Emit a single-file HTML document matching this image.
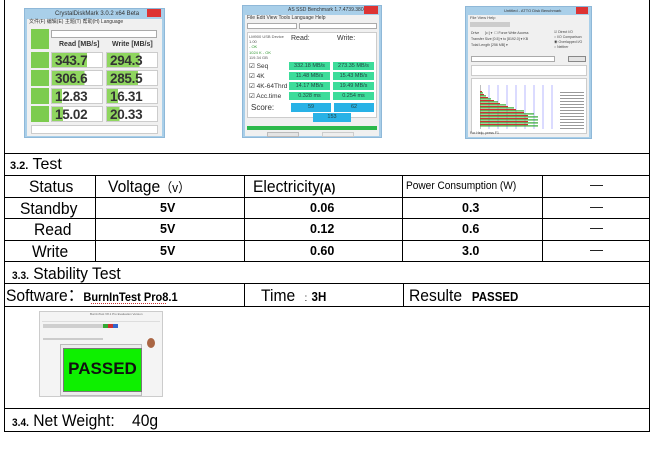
<!DOCTYPE html>
<html><head><meta charset="utf-8"><style>
*{margin:0;padding:0;box-sizing:border-box}
body{width:654px;height:456px;background:#fff;position:relative;overflow:hidden;font-family:"Liberation Sans","Noto Sans CJK SC",sans-serif;color:#000}
.a{position:absolute}
.hl{position:absolute;height:1px;background:#000}
.vl{position:absolute;width:1px;background:#000}
.t{position:absolute;white-space:nowrap;line-height:1}
.n{font-size:17px;transform:scaleX(.92);transform-origin:left}
.b{font-weight:bold;font-size:12.5px}
.cv{position:absolute;font-size:13.5px;font-weight:bold;color:#333;white-space:nowrap;line-height:1;letter-spacing:-.3px}
.sv{position:absolute;font-size:5.5px;color:#244;text-align:center;line-height:8px}
</style></head><body>

<div class="vl" style="left:4px;top:0;height:432px"></div>
<div class="vl" style="left:649px;top:0;height:432px"></div>
<div class="hl" style="left:4px;width:646px;top:153px"></div>
<div class="hl" style="left:4px;width:646px;top:175px"></div>
<div class="hl" style="left:4px;width:646px;top:197px"></div>
<div class="hl" style="left:4px;width:646px;top:218px"></div>
<div class="hl" style="left:4px;width:646px;top:240px"></div>
<div class="hl" style="left:4px;width:646px;top:261px"></div>
<div class="hl" style="left:4px;width:646px;top:283px"></div>
<div class="hl" style="left:4px;width:646px;top:306px"></div>
<div class="hl" style="left:4px;width:646px;top:408px"></div>
<div class="hl" style="left:4px;width:646px;top:431px"></div>
<div class="vl" style="left:95px;top:175px;height:87px"></div>
<div class="vl" style="left:244px;top:175px;height:87px"></div>
<div class="vl" style="left:402px;top:175px;height:87px"></div>
<div class="vl" style="left:542px;top:175px;height:87px"></div>
<div class="vl" style="left:244px;top:283px;height:23px"></div>
<div class="vl" style="left:403px;top:283px;height:23px"></div>

<!-- CrystalDiskMark -->
<div class="a" style="left:24px;top:8px;width:141px;height:130px;background:#a9cfe9;border:1px solid #8fb8d8">
 <div class="t" style="left:30px;top:2px;font-size:6px;color:#333">CrystalDiskMark 3.0.2 x64 Beta</div>
 <div class="a" style="right:3px;top:0;width:14px;height:8px;background:#d33"></div>
 <div class="a" style="left:2px;top:10px;width:135px;height:117px;background:#f0f0f0">
  <div class="t" style="left:2px;top:1px;font-size:5px;color:#333">文件(F) 编辑(E) 主题(T) 帮助(H) Language</div>
  <div class="a" style="left:4px;top:10px;width:18px;height:20px;background:#7ccc4e"></div>
  <div class="a" style="left:24px;top:11px;width:106px;height:8px;background:#fff;border:1px solid #aaa"></div>
  <div class="t" style="left:32px;top:22px;font-size:7px;font-weight:bold;color:#333">Read [MB/s]</div>
  <div class="t" style="left:85px;top:22px;font-size:7px;font-weight:bold;color:#333">Write [MB/s]</div>
  <div class="a" style="left:4px;top:33px;width:18px;height:16px;background:#7ccc4e"></div>
  <div class="a" style="left:4px;top:51px;width:18px;height:16px;background:#7ccc4e"></div>
  <div class="a" style="left:4px;top:69px;width:18px;height:16px;background:#7ccc4e"></div>
  <div class="a" style="left:4px;top:87px;width:18px;height:16px;background:#7ccc4e"></div>
  <div class="a" style="left:24px;top:33px;width:52px;height:16px;background:linear-gradient(90deg,#8fd65f 70%,#fff 70%);border:1px solid #ccc"></div>
  <div class="a" style="left:79px;top:33px;width:52px;height:16px;background:linear-gradient(90deg,#8fd65f 65%,#fff 65%);border:1px solid #ccc"></div>
  <div class="a" style="left:24px;top:51px;width:52px;height:16px;background:linear-gradient(90deg,#8fd65f 65%,#fff 65%);border:1px solid #ccc"></div>
  <div class="a" style="left:79px;top:51px;width:52px;height:16px;background:linear-gradient(90deg,#8fd65f 62%,#fff 62%);border:1px solid #ccc"></div>
  <div class="a" style="left:24px;top:69px;width:52px;height:16px;background:linear-gradient(90deg,#8fd65f 20%,#fff 20%);border:1px solid #ccc"></div>
  <div class="a" style="left:79px;top:69px;width:52px;height:16px;background:linear-gradient(90deg,#8fd65f 22%,#fff 22%);border:1px solid #ccc"></div>
  <div class="a" style="left:24px;top:87px;width:52px;height:16px;background:linear-gradient(90deg,#8fd65f 22%,#fff 22%);border:1px solid #ccc"></div>
  <div class="a" style="left:79px;top:87px;width:52px;height:16px;background:linear-gradient(90deg,#8fd65f 25%,#fff 25%);border:1px solid #ccc"></div>
  <div class="cv" style="left:28px;top:35px">343.7</div>
  <div class="cv" style="left:83px;top:35px">294.3</div>
  <div class="cv" style="left:28px;top:53px">306.6</div>
  <div class="cv" style="left:83px;top:53px">285.5</div>
  <div class="cv" style="left:28px;top:71px">12.83</div>
  <div class="cv" style="left:83px;top:71px">16.31</div>
  <div class="cv" style="left:28px;top:89px">15.02</div>
  <div class="cv" style="left:83px;top:89px">20.33</div>
  <div class="a" style="left:4px;top:106px;width:127px;height:9px;background:#fff;border:1px solid #ccc"></div>
 </div>
</div>

<!-- AS SSD -->
<div class="a" style="left:242px;top:5px;width:140px;height:133px;background:#a9cfe9;border:1px solid #8fb8d8">
 <div class="t" style="left:45px;top:2px;font-size:5px;color:#333">AS SSD Benchmark 1.7.4739.38088</div>
 <div class="a" style="right:3px;top:0;width:14px;height:8px;background:#d33"></div>
 <div class="a" style="left:2px;top:9px;width:134px;height:121px;background:#f0f0f0">
  <div class="t" style="left:2px;top:1px;font-size:5px;color:#333">File Edit View Tools Language Help</div>
  <div class="a" style="left:2px;top:8px;width:50px;height:6px;background:#fff;border:1px solid #aaa"></div>
  <div class="a" style="left:54px;top:8px;width:78px;height:6px;background:#fff;border:1px solid #aaa"></div>
  <div class="a" style="left:2px;top:17px;width:130px;height:86px;background:#fff;border:1px solid #ccc"></div>
  <div class="t" style="left:4px;top:19px;font-size:4px;color:#555;line-height:1.3">LM900 USB Device<br>1.00<br><span style="color:#393">- OK<br>1024 K - OK</span><br>119.34 GB</div>
  <div class="t" style="left:46px;top:20px;font-size:7px;color:#333">Read:</div>
  <div class="t" style="left:92px;top:20px;font-size:7px;color:#333">Write:</div>
  <div class="t" style="left:4px;top:47px;font-size:6.5px;color:#333;line-height:10px">☑ Seq<br>☑ 4K<br>☑ 4K-64Thrd<br>☑ Acc.time</div>
  <div class="a sv" style="left:44px;top:47px;width:41px;height:8px;background:#3ddc9a">332.18 MB/s</div>
  <div class="a sv" style="left:88px;top:47px;width:41px;height:8px;background:#3ddc9a">273.35 MB/s</div>
  <div class="a sv" style="left:44px;top:57px;width:41px;height:8px;background:#3ddc9a">11.48 MB/s</div>
  <div class="a sv" style="left:88px;top:57px;width:41px;height:8px;background:#3ddc9a">15.43 MB/s</div>
  <div class="a sv" style="left:44px;top:67px;width:41px;height:8px;background:#3ddc9a">14.17 MB/s</div>
  <div class="a sv" style="left:88px;top:67px;width:41px;height:8px;background:#3ddc9a">19.49 MB/s</div>
  <div class="a sv" style="left:44px;top:77px;width:41px;height:8px;background:#3ddc9a">0.328 ms</div>
  <div class="a sv" style="left:88px;top:77px;width:41px;height:8px;background:#3ddc9a">0.254 ms</div>
  <div class="t" style="left:6px;top:89px;font-size:8px;color:#333">Score:</div>
  <div class="a sv" style="left:46px;top:88px;width:40px;height:9px;background:#28b2e6">59</div>
  <div class="a sv" style="left:89px;top:88px;width:40px;height:9px;background:#28b2e6">62</div>
  <div class="a sv" style="left:68px;top:98px;width:38px;height:9px;background:#28b2e6">153</div>
  <div class="a" style="left:2px;top:111px;width:130px;height:4px;background:#2bb84a"></div>
  <div class="a" style="left:22px;top:117px;width:32px;height:5px;background:#e4e4e4;border:1px solid #bbb"></div>
  <div class="a" style="left:77px;top:117px;width:32px;height:5px;background:#eee;border:1px solid #ccc"></div>
 </div>
</div>

<!-- ATTO -->
<div class="a" style="left:465px;top:6px;width:127px;height:133px;background:#a9cfe9;border:1px solid #8fb8d8">
 <div class="t" style="left:38px;top:2px;font-size:4px;color:#333">Untitled - ATTO Disk Benchmark</div>
 <div class="a" style="right:3px;top:0;width:12px;height:7px;background:#d33"></div>
 <div class="a" style="left:2px;top:8px;width:121px;height:122px;background:#f0f0f0">
  <div class="t" style="left:2px;top:1px;font-size:4px;color:#444">File View Help</div>
  <div class="a" style="left:2px;top:7px;width:40px;height:5px;background:#ccc"></div>
  <div class="t" style="left:3px;top:15px;font-size:3.5px;color:#444;line-height:6px">Drive &nbsp;&nbsp;&nbsp;&nbsp;&nbsp;[c:] ▾ &nbsp;☐ Force Write Access<br>Transfer Size [0.5] ▾ to [8192.0] ▾ KB<br>Total Length [256 MB] ▾</div>
  <div class="t" style="left:86px;top:15px;font-size:3.5px;color:#444;line-height:5px">☑ Direct I/O<br>○ I/O Comparison<br>◉ Overlapped I/O<br>○ Neither</div>
  <div class="a" style="left:3px;top:41px;width:84px;height:6px;background:#fff;border:1px solid #aaa"></div>
  <div class="a" style="left:100px;top:41px;width:18px;height:6px;background:#e4e4e4;border:1px solid #888"></div>
  <div class="a" style="left:3px;top:50px;width:116px;height:11px;background:#fff;border:1px solid #ccc"></div>
  <div class="a" style="left:3px;top:63px;width:116px;height:56px;background:#fff;border:1px solid #ccc"></div>
  <svg class="a" style="left:12px;top:70px" width="80" height="48">
   <g stroke="#99f" stroke-width=".7"><line x1="9" y1="0" x2="9" y2="44"/><line x1="18" y1="0" x2="18" y2="44"/><line x1="27" y1="0" x2="27" y2="44"/><line x1="36" y1="0" x2="36" y2="44"/><line x1="45" y1="0" x2="45" y2="44"/><line x1="54" y1="0" x2="54" y2="44"/><line x1="63" y1="0" x2="63" y2="44"/><line x1="72" y1="0" x2="72" y2="44"/></g>
   <line x1="0" y1="0" x2="0" y2="44" stroke="#000" stroke-width=".5"/>
   <g fill="#c33"><rect x="0" y="6" width="2" height="1.2"/><rect x="0" y="9" width="4" height="1.2"/><rect x="0" y="12" width="8" height="1.2"/><rect x="0" y="15" width="14" height="1.2"/><rect x="0" y="18" width="20" height="1.2"/><rect x="0" y="21" width="28" height="1.2"/><rect x="0" y="24" width="36" height="1.2"/><rect x="0" y="27" width="44" height="1.2"/><rect x="0" y="30" width="48" height="1.2"/><rect x="0" y="33" width="48" height="1.2"/><rect x="0" y="36" width="48" height="1.2"/><rect x="0" y="39" width="48" height="1.2"/></g>
   <g fill="#3a3"><rect x="0" y="7.3" width="3" height="1.2"/><rect x="0" y="10.3" width="6" height="1.2"/><rect x="0" y="13.3" width="11" height="1.2"/><rect x="0" y="16.3" width="18" height="1.2"/><rect x="0" y="19.3" width="26" height="1.2"/><rect x="0" y="22.3" width="34" height="1.2"/><rect x="0" y="25.3" width="44" height="1.2"/><rect x="0" y="28.3" width="54" height="1.2"/><rect x="0" y="31.3" width="58" height="1.2"/><rect x="0" y="34.3" width="58" height="1.2"/><rect x="0" y="37.3" width="58" height="1.2"/><rect x="0" y="40.3" width="58" height="1.2"/></g>
  </svg>
  <div class="a" style="left:92px;top:76px;width:24px;height:40px;background:repeating-linear-gradient(#fff 0 1px,#999 1px 2.2px,#fff 2.2px 3px)"></div>
  <div class="t" style="left:2px;top:117px;font-size:3.5px;color:#444">For Help, press F1</div>
 </div>
</div>

<!-- 3.2 -->
<div class="t" style="left:10px;top:157px;font-size:16px"><span style="font-size:11px;font-weight:bold">3.2.</span> Test</div>
<div class="t n" style="left:29px;top:178px">Status</div>
<div class="t n" style="left:108px;top:178px">Voltage<span style="font-size:13px">（v）</span></div>
<div class="t n" style="left:253px;top:178px">Electricity<span style="font-size:12px;font-weight:bold">(A)</span></div>
<div class="t" style="left:406px;top:181px;font-size:11px;transform:scaleX(.92);transform-origin:left">Power Consumption (W)</div>
<div class="t" style="left:590px;top:178px;font-size:13px">—</div>
<div class="t n" style="left:20px;top:200px">Standby</div>
<div class="t n" style="left:34px;top:221px">Read</div>
<div class="t n" style="left:32px;top:243px">Write</div>
<div class="t b" style="left:160px;top:202px">5V</div>
<div class="t b" style="left:160px;top:223px">5V</div>
<div class="t b" style="left:160px;top:245px">5V</div>
<div class="t b" style="left:310px;top:202px">0.06</div>
<div class="t b" style="left:310px;top:223px">0.12</div>
<div class="t b" style="left:310px;top:245px">0.60</div>
<div class="t b" style="left:462px;top:202px">0.3</div>
<div class="t b" style="left:462px;top:223px">0.6</div>
<div class="t b" style="left:462px;top:245px">3.0</div>
<div class="t" style="left:590px;top:200px;font-size:13px">—</div>
<div class="t" style="left:590px;top:221px;font-size:13px">—</div>
<div class="t" style="left:590px;top:243px;font-size:13px">—</div>

<!-- 3.3 -->
<div class="t n" style="left:12px;top:265px"><span style="font-size:11px;font-weight:bold">3.3.</span> Stability Test</div>
<div class="t n" style="left:6px;top:287px">Software：<span class="b" style="font-size:12px">BurnInTest Pro8.1</span></div>
<div class="a" style="left:91px;top:302px;width:75px;height:2px;border-bottom:1px dotted #c33"></div>
<div class="t n" style="left:261px;top:287px">Time <span style="font-size:10px">&nbsp;&nbsp;:</span> <span class="b">3H</span></div>
<div class="t n" style="left:409px;top:287px">Resulte <span class="b" style="margin-left:6px">PASSED</span></div>

<!-- burnin -->
<div class="a" style="left:39px;top:311px;width:124px;height:86px;background:#f4f4f4;border:1px solid #ccc">
 <div class="t" style="left:50px;top:1px;font-size:3px;color:#666">BurnInTest V8.1 Pro Evaluation Version</div>
 <div class="a" style="left:2px;top:9px;width:118px;height:1px;background:#ddd"></div>
 <div class="a" style="left:3px;top:12px;width:60px;height:4px;background:#cfcfcf"></div>
 <div class="a" style="left:63px;top:12px;width:15px;height:4px;background:linear-gradient(90deg,#3a3 33%,#c33 33%,#c33 66%,#36c 66%)"></div>
 <div class="a" style="left:3px;top:26px;width:60px;height:2px;background:#ccc"></div>
 <div class="a" style="left:107px;top:26px;width:8px;height:10px;border-radius:50%;background:#a64"></div>
 <div class="a" style="left:20px;top:32px;width:82px;height:52px;background:#ececec;border:1px solid #bbb"></div>
 <div class="a" style="left:23px;top:36px;width:79px;height:44px;background:#0ef000;border:1px solid #777"></div>
 <div class="t" style="left:26px;top:48px;width:73px;text-align:center;font-size:17px;font-weight:bold;color:#111">PASSED</div>
</div>

<div class="t n" style="left:12px;top:412px"><span style="font-size:11px;font-weight:bold">3.4.</span> Net Weight:&nbsp;&nbsp;&nbsp; 40g</div>
</body></html>
